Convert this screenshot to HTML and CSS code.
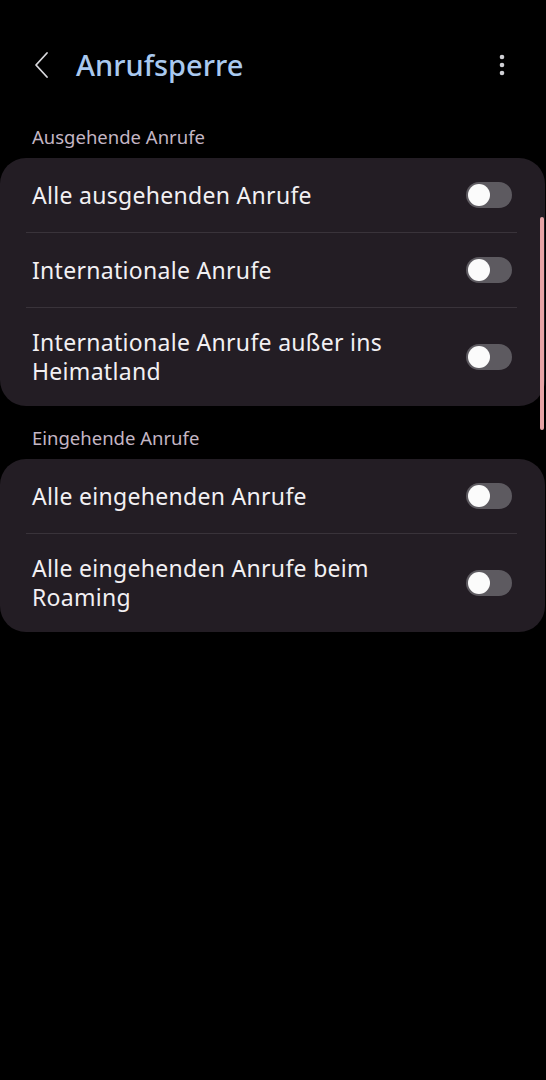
FILE: index.html
```html
<!DOCTYPE html>
<html>
<head>
	<meta charset="UTF-8">
	<title>Anrufsperre</title>
	<link rel="stylesheet" href="styles.css">
</head>
<body>
	<header class="topbar">
		<svg class="back" width="20" height="30" viewBox="0 0 20 30">
			<polyline points="14,3 3,15 14,27" fill="none" stroke="#d8d8dc" stroke-width="1.8" stroke-linecap="round" stroke-linejoin="round"/>
		</svg>
		<h1 class="title">Anrufsperre</h1>
		<svg class="more" width="8" height="24" viewBox="0 0 8 24">
			<circle cx="4" cy="4" r="2.3" fill="#d0d0d4"/>
			<circle cx="4" cy="12" r="2.3" fill="#d0d0d4"/>
			<circle cx="4" cy="20" r="2.3" fill="#d0d0d4"/>
		</svg>
	</header>
	<main>
		<div class="section-title">Ausgehende Anrufe</div>
		<div class="card">
			<div class="row">
				<span class="label">Alle ausgehenden Anrufe</span>
				<span class="switch"><span class="knob"></span></span>
			</div>
			<div class="divider"></div>
			<div class="row">
				<span class="label">Internationale Anrufe</span>
				<span class="switch"><span class="knob"></span></span>
			</div>
			<div class="divider"></div>
			<div class="row">
				<span class="label">Internationale Anrufe außer ins<br>Heimatland</span>
				<span class="switch"><span class="knob"></span></span>
			</div>
		</div>
		<div class="section-title">Eingehende Anrufe</div>
		<div class="card">
			<div class="row">
				<span class="label">Alle eingehenden Anrufe</span>
				<span class="switch"><span class="knob"></span></span>
			</div>
			<div class="divider"></div>
			<div class="row">
				<span class="label">Alle eingehenden Anrufe beim<br>Roaming</span>
				<span class="switch"><span class="knob"></span></span>
			</div>
		</div>
	</main>
	<div class="scrollbar"></div>
</body>
</html>
```

FILE: styles.css
```css
body {
	margin: 0;
	padding: 0;
	background-color: #000;
	font-family: "Noto Sans", sans-serif;
	color: #f2f0f3;
	min-height: 1080px;
}
.topbar {
	display: flex;
	align-items: center;
	height: 50px;
	padding: 40px 0 0 0;
}
.back {
	margin-left: 33px;
	margin-right: 23px;
}
.title {
	flex: 1;
	margin: 0;
	font-size: 29px;
	font-weight: 500;
	color: #a9c9ef;
	line-height: 50px;
}
.more {
	margin-right: 40px;
}
.section-title {
	margin: 35px 0 9px 32px;
	font-size: 18.5px;
	line-height: 24px;
	color: #c4b6c4;
}
.card + .section-title {
	margin-top: 20px;
}
.card {
	background-color: #231d24;
	border-radius: 26px;
	margin: 0 1px 0 0;
}
.row {
	display: flex;
	align-items: center;
	justify-content: space-between;
	min-height: 74px;
	padding: 20px 33px 20px 32px;
	box-sizing: border-box;
}
.label {
	font-size: 23px;
	letter-spacing: 0.3px;
	line-height: 29px;
}
.divider {
	height: 1px;
	margin: 0 28px 0 26px;
	background-color: #39333a;
}
.switch {
	position: relative;
	width: 46px;
	height: 26px;
	border-radius: 13px;
	background-color: #5d5a60;
	flex-shrink: 0;
}
.knob {
	position: absolute;
	left: 2px;
	top: 2px;
	width: 22px;
	height: 22px;
	border-radius: 50%;
	background-color: #fbfbfb;
}
.scrollbar {
	position: absolute;
	right: 2px;
	top: 217px;
	width: 4px;
	height: 213px;
	border-radius: 2px;
	background-color: #e6a3a6;
}
```
